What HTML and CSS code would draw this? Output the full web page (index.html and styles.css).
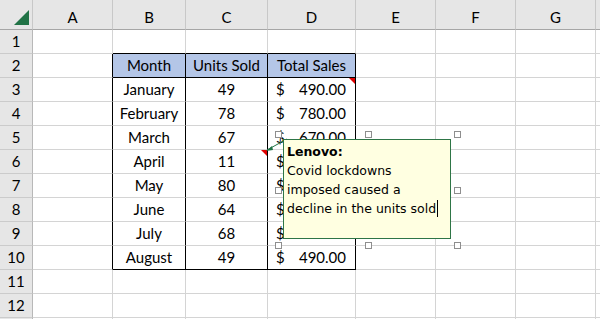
FILE: index.html
```html
<!DOCTYPE html>
<html lang="en">

<head>
  <meta charset="UTF-8" />
  <meta name="viewport" content="width=device-width, initial-scale=1.0" />
  <title>Sales by Month</title>
  <link rel="stylesheet" href="styles.css">
</head>

<body>

  <div class="sheet-wrap">
    <table class="sheet">
      <colgroup>
        <col class="col-rh">
        <col class="col-a">
        <col class="col-b">
        <col class="col-c">
        <col class="col-d">
        <col class="col-e">
        <col class="col-f">
        <col class="col-g">
        <col class="col-h">
      </colgroup>
      <thead>
        <tr>
          <th class="corner">
            <svg width="33" height="29" viewBox="0 0 33 29">
              <polygon points="29,10 29,25 14,25" fill="#217346" />
            </svg>
          </th>
          <th>A</th>
          <th>B</th>
          <th>C</th>
          <th>D</th>
          <th>E</th>
          <th>F</th>
          <th>G</th>
          <th></th>
        </tr>
      </thead>
      <tbody>
        <tr>
          <th>1</th>
          <td></td>
          <td class="edge-b"></td>
          <td class="edge-b"></td>
          <td class="edge-b"></td>
          <td></td><td></td><td></td><td></td>
        </tr>
        <tr>
          <th>2</th>
          <td class="edge-r"></td>
          <td class="box head">Month</td>
          <td class="box head">Units Sold</td>
          <td class="box head">Total Sales</td>
          <td></td><td></td><td></td><td></td>
        </tr>
        <!-- data rows -->
        <tr>
          <th>3</th>
          <td class="edge-r"></td>
          <td class="box">January</td>
          <td class="box">49</td>
          <td class="box money note"><span>$</span><span>490.00</span></td>
          <td></td><td></td><td></td><td></td>
        </tr>
        <tr>
          <th>4</th>
          <td class="edge-r"></td>
          <td class="box">February</td>
          <td class="box">78</td>
          <td class="box money"><span>$</span><span>780.00</span></td>
          <td></td><td></td><td></td><td></td>
        </tr>
        <tr>
          <th>5</th>
          <td class="edge-r"></td>
          <td class="box">March</td>
          <td class="box">67</td>
          <td class="box money"><span>$</span><span>670.00</span></td>
          <td></td><td></td><td></td><td></td>
        </tr>
        <tr>
          <th>6</th>
          <td class="edge-r"></td>
          <td class="box">April</td>
          <td class="box note">11</td>
          <td class="box money"><span>$</span><span>110.00</span></td>
          <td></td><td></td><td></td><td></td>
        </tr>
        <tr>
          <th>7</th>
          <td class="edge-r"></td>
          <td class="box">May</td>
          <td class="box">80</td>
          <td class="box money"><span>$</span><span>800.00</span></td>
          <td></td><td></td><td></td><td></td>
        </tr>
        <tr>
          <th>8</th>
          <td class="edge-r"></td>
          <td class="box">June</td>
          <td class="box">64</td>
          <td class="box money"><span>$</span><span>640.00</span></td>
          <td></td><td></td><td></td><td></td>
        </tr>
        <tr>
          <th>9</th>
          <td class="edge-r"></td>
          <td class="box">July</td>
          <td class="box">68</td>
          <td class="box money"><span>$</span><span>680.00</span></td>
          <td></td><td></td><td></td><td></td>
        </tr>
        <tr>
          <th>10</th>
          <td class="edge-r"></td>
          <td class="box last">August</td>
          <td class="box last">49</td>
          <td class="box last money"><span>$</span><span>490.00</span></td>
          <td></td><td></td><td></td><td></td>
        </tr>
        <tr>
          <th>11</th>
          <td></td><td></td><td></td><td></td><td></td><td></td><td></td><td></td>
        </tr>
        <tr>
          <th>12</th>
          <td></td><td></td><td></td><td></td><td></td><td></td><td></td><td></td>
        </tr>
        <tr>
          <th></th>
          <td></td><td></td><td></td><td></td><td></td><td></td><td></td><td></td>
        </tr>
      </tbody>
    </table>

    <!-- comment on C6, being edited -->
    <svg class="pointer" width="26" height="18" viewBox="0 0 26 18">
      <line x1="3" y1="13" x2="23" y2="2" stroke="#217346" stroke-width="1" />
      <polygon points="2,14 8,9 9,13" fill="#217346" />
    </svg>

    <div class="comment-frame">
      <span class="handle h-tl"></span>
      <span class="handle h-tc"></span>
      <span class="handle h-tr"></span>
      <span class="handle h-ml"></span>
      <span class="handle h-mr"></span>
      <span class="handle h-bl"></span>
      <span class="handle h-bc"></span>
      <span class="handle h-br"></span>
      <div class="comment">
        <strong>Lenovo:</strong><br>
        Covid lockdowns<br>
        imposed caused a<br>
        decline in the units sold<span class="caret"></span>
      </div>
    </div>
  </div>

</body>

</html>
```

FILE: styles.css
```css
body {
  margin: 0;
  padding: 0;
  background: #fff;
  overflow: hidden;
  font-family: 'Lato', 'Liberation Sans', sans-serif;
  color: #000;
}

.sheet-wrap {
  position: relative;
  width: 600px;
  height: 319px;
  overflow: hidden;
}

.sheet {
  table-layout: fixed;
  width: 640px;
  border-collapse: separate;
  border-spacing: 0;
  font-size: 15px;
}

.col-rh { width: 33px; }
.col-a { width: 80px; }
.col-b { width: 73px; }
.col-c { width: 82px; }
.col-d { width: 88px; }
.col-e { width: 80px; }
.col-f { width: 80px; }
.col-g { width: 80px; }
.col-h { width: 44px; }

.sheet td,
.sheet th {
  padding: 0;
  height: 23px;
  line-height: 23px;
  border-right: 1px solid #d4d4d4;
  border-bottom: 1px solid #d4d4d4;
  text-align: center;
  font-weight: normal;
  white-space: nowrap;
  overflow: hidden;
}

.sheet thead th {
  height: 29px;
  line-height: 23px;
  padding-top: 0;
  vertical-align: bottom;
  background: #e6e6e6;
  border-right: 1px solid #c8c8c8;
  border-bottom: 1px solid #a6a6a6;
}

.sheet tbody th {
  background: #e6e6e6;
  border-right: 1px solid #b8b8b8;
  border-bottom: 1px solid #cbcbcb;
}

.sheet thead .corner {
  padding: 0;
  vertical-align: top;
  line-height: 0;
}

/* table B2:D10 */
.edge-b {
  border-bottom-color: #000 !important;
}

.edge-r {
  border-right-color: #000 !important;
}

.box {
  border-right-color: #000 !important;
}

.box.head {
  background: #b4c6e7;
  border-bottom-color: #000;
}

.box.last {
  border-bottom-color: #000;
}

.money span {
  float: left;
  padding-left: 8px;
}

.money span + span {
  float: right;
  padding-left: 0;
  padding-right: 9px;
}

.note {
  position: relative;
}

.note::after {
  content: "";
  position: absolute;
  top: 0;
  right: 0;
  border-top: 6px solid #e00000;
  border-left: 6px solid transparent;
}

.pointer {
  position: absolute;
  left: 264px;
  top: 137px;
}

.comment-frame {
  position: absolute;
  left: 275px;
  top: 131px;
  width: 186px;
  height: 118px;
}

.handle {
  position: absolute;
  width: 5px;
  height: 5px;
  background: #fff;
  border: 1px solid #8e8e8e;
}

.h-tl { left: 0; top: 0; }
.h-tc { left: 90px; top: 0; }
.h-tr { right: 0; top: 0; }
.h-ml { left: 0; top: 56px; }
.h-mr { right: 0; top: 56px; }
.h-bl { left: 0; bottom: 0; }
.h-bc { left: 90px; bottom: 0; }
.h-br { right: 0; bottom: 0; }

.comment {
  position: absolute;
  left: 8px;
  top: 8px;
  width: 163px;
  height: 96px;
  padding: 2px 0 0 3px;
  background: #ffffe1;
  border: 1px solid #2e7546;
  font-family: 'DejaVu Sans', sans-serif;
  font-size: 12.5px;
  line-height: 19px;
  color: #000;
}

.caret {
  display: inline-block;
  width: 0;
  height: 17px;
  border-left: 1px solid #000;
  vertical-align: -4px;
  margin-left: 1px;
}
```
